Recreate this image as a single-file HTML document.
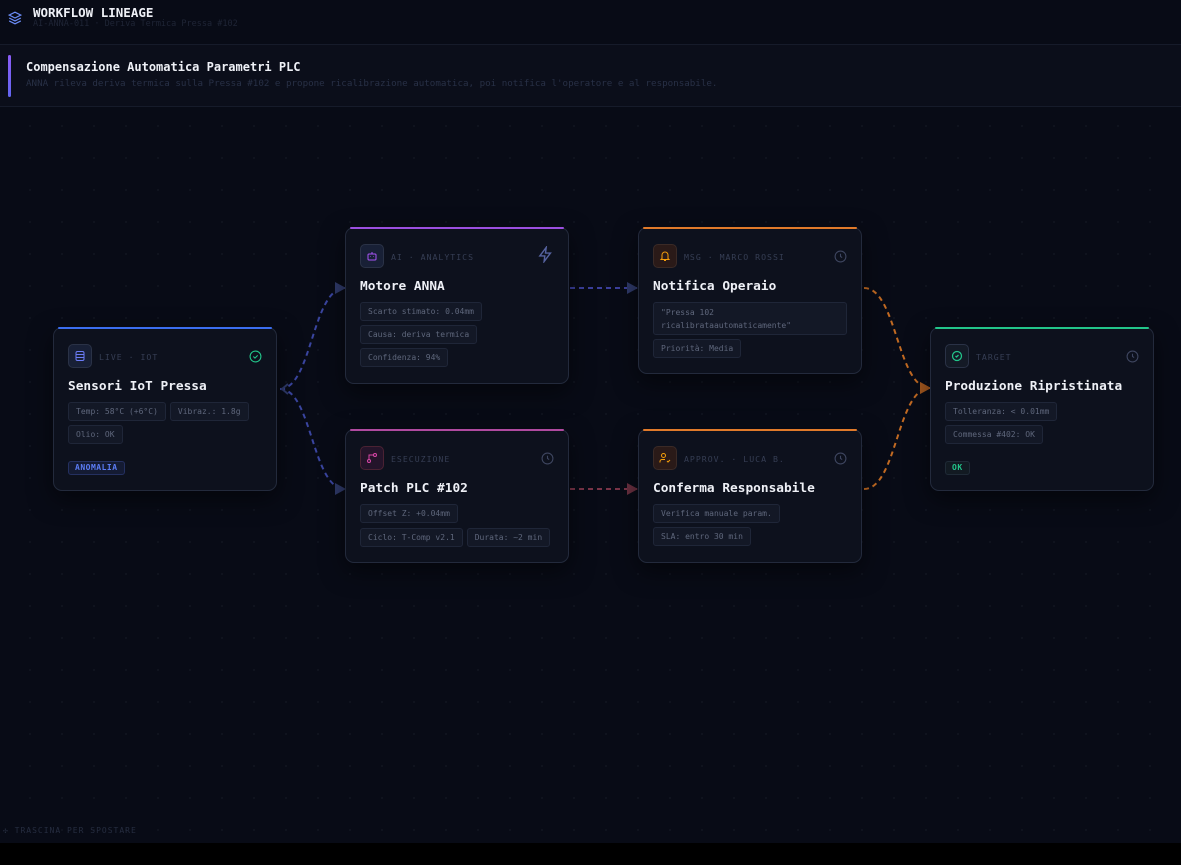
<!DOCTYPE html>
<html><head><meta charset="utf-8"><style>
*{box-sizing:border-box;margin:0;padding:0}
body{width:1181px;height:865px;background:#000;font-family:"DejaVu Sans Mono","Liberation Mono",monospace;overflow:hidden;position:relative}
#app{position:absolute;left:0;top:0;width:1181px;height:843px;background:#080b16;background-image:radial-gradient(#10141f 1px,transparent 1.2px);background-size:32px 32px;background-position:14px 14px}
.hdr{position:absolute;left:0;top:0;width:1181px;height:45px;border-bottom:1px solid #161b2a;background:#080b16}
.hdr .t{position:absolute;left:33px;top:5px;color:#eef0f6;font-weight:bold;font-size:12.5px}
.hdr .s{position:absolute;left:33px;top:19px;color:#1f2536;font-size:8.5px}
.ban{position:absolute;left:0;top:45px;width:1181px;height:62px;background:#0b0e1a;border-bottom:1px solid #161b2a}
.ban .bar{position:absolute;left:8px;top:10px;width:3px;height:42px;border-radius:2px;background:linear-gradient(#8b5cf6,#6366f1)}
.ban .t{position:absolute;left:26px;top:15px;color:#eef0f6;font-weight:bold;font-size:12px}
.ban .s{position:absolute;left:26px;top:33px;color:#283046;font-size:9.2px}
.card{position:absolute;width:224px;background:#0d111d;border:1px solid #232a3c;border-radius:9px;box-shadow:0 8px 24px rgba(0,0,0,.5)}
.card .top{position:absolute;left:4px;right:4px;top:-1px;height:2px;border-radius:2px}
.ic{position:absolute;left:14px;top:16px;width:24px;height:24px;border-radius:5px;border:1px solid #2a3246;background:#182036;display:flex;align-items:center;justify-content:center}
.lab{position:absolute;left:45px;top:24px;font-size:8.2px;letter-spacing:1px;color:#363e54}
.st{position:absolute;right:14px;top:20px}
.ti{position:absolute;left:14px;top:51px;color:#eef0f6;font-weight:bold;font-size:12.8px}
.chips{position:absolute;left:14px;top:74px;width:200px;display:flex;flex-wrap:wrap;gap:4px}
.chip{height:19px;padding:0 7px;border:1px solid #1f2638;background:#131826;border-radius:3px;color:#5f677c;font-size:8px;line-height:17px;white-space:nowrap}
.tag{position:absolute;left:14px;height:14px;padding:0 6px;border-radius:3px;font-size:8px;font-weight:bold;line-height:12px;letter-spacing:.5px}
.foot{position:absolute;left:3px;top:826px;color:#262d40;font-size:8px;letter-spacing:1px}
</style></head><body>
<div id="app">
<svg width="1181" height="843" style="position:absolute;left:0;top:0">
<defs>
<marker id="mb" markerUnits="userSpaceOnUse" markerWidth="11" markerHeight="12" refX="10" refY="6" orient="auto"><path d="M0,0L11,6L0,12z" fill="#2f3a6a"/></marker>
<marker id="mr" markerUnits="userSpaceOnUse" markerWidth="11" markerHeight="12" refX="10" refY="6" orient="auto"><path d="M0,0L11,6L0,12z" fill="#6a3040"/></marker>
<marker id="mo" markerUnits="userSpaceOnUse" markerWidth="11" markerHeight="12" refX="10" refY="6" orient="auto"><path d="M0,0L11,6L0,12z" fill="#a5591f"/></marker>
</defs>
<g fill="none" stroke-width="2" stroke-dasharray="5 4">
<path d="M280,389 C312,389 312,288 345,288" stroke="#3a45a0" marker-end="url(#mb)"/>
<path d="M280,389 C312,389 312,489 345,489" stroke="#3a45a0" marker-end="url(#mb)"/>
<path d="M570,288 L637,288" stroke="#3b3f9c" marker-end="url(#mb)"/>
<path d="M570,489 L637,489" stroke="#7a3448" marker-end="url(#mr)"/>
<path d="M864,288 C897,288 897,388 930,388" stroke="#c26a22" marker-end="url(#mo)"/>
<path d="M864,489 C897,489 897,388 930,388" stroke="#c26a22" marker-end="url(#mo)"/>
</g>
<path d="M288,384 L282,389 L288,394" fill="none" stroke="#2f3a6a" stroke-width="2"/>
</svg>
<div class="hdr">
<svg style="position:absolute;left:8px;top:11px" width="14" height="14" viewBox="0 0 24 24" fill="none" stroke="#6b8cf7" stroke-width="2"><path d="M12 2L2 7l10 5 10-5z"/><path d="M2 12l10 5 10-5"/><path d="M2 17l10 5 10-5"/></svg>
<div class="t">WORKFLOW LINEAGE</div><div class="s">AI-ANNA-011 · Deriva Termica Pressa #102</div></div>
<div class="ban"><div class="bar"></div><div class="t">Compensazione Automatica Parametri PLC</div>
<div class="s">ANNA rileva deriva termica sulla Pressa #102 e propone ricalibrazione automatica, poi notifica l'operatore e al responsabile.</div></div>

<div class="card" style="left:53px;top:327px;height:164px"><div class="top" style="background:#3b6ef0"></div>
<div class="ic"><svg width="12" height="12" viewBox="0 0 24 24" fill="none" stroke="#6b7cf7" stroke-width="2"><rect x="4" y="3" width="16" height="18" rx="3"/><path d="M4 9h16M4 15h16"/></svg></div>
<div class="lab">LIVE · IOT</div>
<div class="st"><svg width="13" height="13" viewBox="0 0 24 24" fill="none" stroke="#22c58a" stroke-width="2"><circle cx="12" cy="12" r="10"/><path d="M8 12l3 3 5-5"/></svg></div>
<div class="ti">Sensori IoT Pressa</div>
<div class="chips"><div class="chip">Temp: 58°C (+6°C)</div><div class="chip">Vibraz.: 1.8g</div><div class="chip">Olio: OK</div></div>
<div class="tag" style="top:133px;background:#141b33;border:1px solid #243060;color:#5b7cf5">ANOMALIA</div></div>

<div class="card" style="left:345px;top:227px;height:157px"><div class="top" style="background:#9b4fe0"></div>
<div class="ic"><svg width="12" height="12" viewBox="0 0 24 24" fill="none" stroke="#a855f7" stroke-width="2"><rect x="4" y="8" width="16" height="12" rx="2"/><path d="M12 4v4M9 13v1M15 13v1"/></svg></div>
<div class="lab">AI · ANALYTICS</div>
<div class="st" style="top:18px"><svg width="17" height="17" viewBox="0 0 24 24" fill="none" stroke="#5663a0" stroke-width="2"><path d="M13 2L4 14h7l-1 8 9-12h-7z"/></svg></div>
<div class="ti">Motore ANNA</div>
<div class="chips" style="flex-direction:column;align-items:flex-start"><div class="chip">Scarto stimato: 0.04mm</div><div class="chip">Causa: deriva termica</div><div class="chip">Confidenza: 94%</div></div></div>

<div class="card" style="left:638px;top:227px;height:147px"><div class="top" style="background:#e07a2a"></div>
<div class="ic" style="background:#2a1a18;border-color:#3a2a26"><svg width="12" height="12" viewBox="0 0 24 24" fill="none" stroke="#f59e0b" stroke-width="2"><path d="M6 17V10a6 6 0 0112 0v7l2 2H4z"/><path d="M10 21h4"/></svg></div>
<div class="lab">MSG · MARCO ROSSI</div>
<div class="st"><svg width="13" height="13" viewBox="0 0 24 24" fill="none" stroke="#3e4660" stroke-width="2"><circle cx="12" cy="12" r="10"/><path d="M12 7v5l3 2"/></svg></div>
<div class="ti">Notifica Operaio</div>
<div class="chips"><div class="chip" style="width:194px;height:33px;line-height:13px;padding-top:3px;white-space:normal">"Pressa 102 ricalibrataautomaticamente"</div><div class="chip">Priorità: Media</div></div></div>

<div class="card" style="left:345px;top:429px;height:134px"><div class="top" style="background:#b04aa0"></div>
<div class="ic" style="background:#24142a;border-color:#4a2233"><svg width="12" height="12" viewBox="0 0 24 24" fill="none" stroke="#d946a8" stroke-width="2"><circle cx="6" cy="18" r="3"/><circle cx="18" cy="6" r="3"/><path d="M6 15V6h9"/></svg></div>
<div class="lab">ESECUZIONE</div>
<div class="st"><svg width="13" height="13" viewBox="0 0 24 24" fill="none" stroke="#3e4660" stroke-width="2"><circle cx="12" cy="12" r="10"/><path d="M12 7v5l3 2"/></svg></div>
<div class="ti">Patch PLC #102</div>
<div class="chips"><div class="chip">Offset Z: +0.04mm</div></div>
<div class="chips" style="top:98px"><div class="chip">Ciclo: T-Comp v2.1</div><div class="chip">Durata: ~2 min</div></div></div>

<div class="card" style="left:638px;top:429px;height:134px"><div class="top" style="background:#e07a2a"></div>
<div class="ic" style="background:#2a1a18;border-color:#3a2a26"><svg width="12" height="12" viewBox="0 0 24 24" fill="none" stroke="#f59e0b" stroke-width="2"><circle cx="9" cy="7" r="4"/><path d="M2 21v-2a4 4 0 014-4h6M16 18l2 2 4-4"/></svg></div>
<div class="lab">APPROV. · LUCA B.</div>
<div class="st"><svg width="13" height="13" viewBox="0 0 24 24" fill="none" stroke="#3e4660" stroke-width="2"><circle cx="12" cy="12" r="10"/><path d="M12 7v5l3 2"/></svg></div>
<div class="ti">Conferma Responsabile</div>
<div class="chips" style="flex-direction:column;align-items:flex-start"><div class="chip">Verifica manuale param.</div><div class="chip">SLA: entro 30 min</div></div></div>

<div class="card" style="left:930px;top:327px;height:164px"><div class="top" style="background:#22c58a"></div>
<div class="ic" style="background:#141a26"><svg width="12" height="12" viewBox="0 0 24 24" fill="none" stroke="#22c58a" stroke-width="2.5"><circle cx="12" cy="12" r="9"/><path d="M9 12l2 2 4-4"/></svg></div>
<div class="lab">TARGET</div>
<div class="st"><svg width="13" height="13" viewBox="0 0 24 24" fill="none" stroke="#3e4660" stroke-width="2"><circle cx="12" cy="12" r="10"/><path d="M12 7v5l3 2"/></svg></div>
<div class="ti">Produzione Ripristinata</div>
<div class="chips" style="flex-direction:column;align-items:flex-start"><div class="chip">Tolleranza: &lt; 0.01mm</div><div class="chip">Commessa #402: OK</div></div>
<div class="tag" style="top:133px;background:#121a22;border:1px solid #1f2a36;color:#22c58a">OK</div></div>

<div class="foot">✣ TRASCINA PER SPOSTARE</div>
</div>
</body></html>
